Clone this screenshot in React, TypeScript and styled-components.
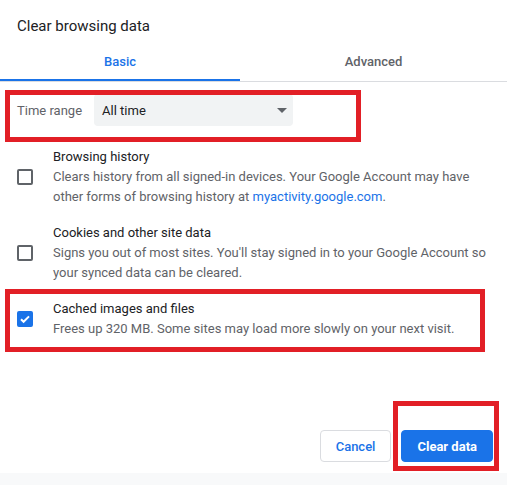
import styled, { createGlobalStyle } from "styled-components";

const GlobalStyle = createGlobalStyle`
  html, body {
    margin: 0;
    padding: 0;
    background: #ffffff;
  }
  body {
    font-family: Roboto, "Liberation Sans", Arial, sans-serif;
    color: #202124;
  }
`;

const App = () => {
  return (
    <>
      <GlobalStyle />
      <Dialog>
        <Title>Clear browsing data</Title>
        <TabBar>
          <Tab $active $width={240}>
            Basic
          </Tab>
          <Tab $width={267}>Advanced</Tab>
        </TabBar>

        <TimeRow>
          <Label>Time range</Label>
          <Select>
            <span>All time</span>
            <Arrow />
          </Select>
          <Annotation $top={-4} $left={5} $width={356} $height={52} />
        </TimeRow>

        <List>
          {items.map((item) => (
            <Item key={item.id}>
              <Checkbox $checked={item.checked}>
                {item.checked && (
                  <svg width="12" height="12" viewBox="0 0 12 12">
                    <path
                      d="M2 6.2l2.6 2.6L10 3.4"
                      fill="none"
                      stroke="#ffffff"
                      strokeWidth="2"
                    />
                  </svg>
                )}
              </Checkbox>
              <ItemText>
                <ItemTitle>{item.title}</ItemTitle>
                <ItemDesc>{item.desc()}</ItemDesc>
              </ItemText>
              {item.checked && (
                <Annotation $top={-2} $left={5} $width={480} $height={63} />
              )}
            </Item>
          ))}
        </List>

        <Footer>
          <Button>Cancel</Button>
          <Button $primary>
            Clear data
            <Annotation $top={-30} $left={-9} $width={106} $height={70} />
          </Button>
        </Footer>
        <BottomStrip />
      </Dialog>
    </>
  );
};

export default App;

const Dialog = styled.div`
  width: 507px;
  height: 485px;
  display: flex;
  flex-direction: column;
  background: #ffffff;
  overflow: hidden;
`;

const Title = styled.div`
  padding: 16px 17px 0;
  height: 24px;
  font-size: 15px;
  line-height: 20px;
  color: #202124;
`;

const TabBar = styled.div`
  display: flex;
  border-bottom: 1px solid #dadce0;
`;

const Tab = styled.div<{ $active?: boolean; $width: number }>`
  width: ${(p) => p.$width}px;
  height: 41px;
  box-sizing: border-box;
  padding-top: 3px;
  display: flex;
  align-items: center;
  justify-content: center;
  font-size: 13px;
  font-weight: 500;
  color: ${(p) => (p.$active ? "#1a73e8" : "#5f6368")};
  border-bottom: 2px solid ${(p) => (p.$active ? "#1a73e8" : "transparent")};
`;

const TimeRow = styled.div`
  position: relative;
  margin-top: 12px;
  padding-left: 17px;
  display: flex;
  align-items: center;
  gap: 12px;
  height: 32px;
`;

const Label = styled.div`
  font-size: 13px;
  color: #5f6368;
`;

const Select = styled.div`
  width: 199px;
  height: 32px;
  box-sizing: border-box;
  padding: 0 6px 0 8px;
  border-radius: 4px;
  background: #f1f3f4;
  display: flex;
  align-items: center;
  justify-content: space-between;
  font-size: 13px;
  color: #202124;
`;

const Arrow = styled.div`
  width: 0;
  height: 0;
  border-left: 5px solid transparent;
  border-right: 5px solid transparent;
  border-top: 5px solid #5f6368;
`;

const List = styled.div`
  margin-top: 13px;
  display: flex;
  flex-direction: column;
`;

const Item = styled.div`
  position: relative;
  display: flex;
  align-items: center;
  gap: 20px;
  padding: 8px 14px 8px 17px;
`;

const Checkbox = styled.div<{ $checked?: boolean }>`
  flex: none;
  width: 16px;
  height: 16px;
  box-sizing: border-box;
  border-radius: 2px;
  border: 2px solid ${(p) => (p.$checked ? "#1a73e8" : "#5f6368")};
  background: ${(p) => (p.$checked ? "#1a73e8" : "transparent")};
  display: flex;
  align-items: center;
  justify-content: center;
`;

const ItemText = styled.div`
  display: flex;
  flex-direction: column;
  font-size: 13px;
  line-height: 20px;
`;

const ItemTitle = styled.div`
  color: #202124;
`;

const ItemDesc = styled.div`
  color: #5f6368;
`;

const Link = styled.a`
  color: #1a73e8;
  text-decoration: none;
`;

const Footer = styled.div`
  margin-top: auto;
  display: flex;
  justify-content: flex-end;
  gap: 10px;
  padding: 0 14px 11px;
`;

const Button = styled.button<{ $primary?: boolean }>`
  position: relative;
  height: 32px;
  padding: 0 15px;
  border-radius: 4px;
  font-family: Roboto, "Liberation Sans", Arial, sans-serif;
  font-size: 13px;
  font-weight: ${(p) => (p.$primary ? 700 : 500)};
  cursor: pointer;
  color: ${(p) => (p.$primary ? "#ffffff" : "#1a73e8")};
  background: ${(p) => (p.$primary ? "#1a73e8" : "#ffffff")};
  border: 1px solid ${(p) => (p.$primary ? "#1a73e8" : "#dadce0")};
`;

const BottomStrip = styled.div`
  height: 12px;
  background: #f8f9fa;
`;

const Annotation = styled.div<{
  $top: number;
  $left: number;
  $width: number;
  $height: number;
}>`
  position: absolute;
  top: ${(p) => p.$top}px;
  left: ${(p) => p.$left}px;
  width: ${(p) => p.$width}px;
  height: ${(p) => p.$height}px;
  box-sizing: border-box;
  border: 5px solid #e21f26;
  pointer-events: none;
`;

const items = [
  {
    id: "history",
    title: "Browsing history",
    checked: false,
    desc: () => (
      <>
        Clears history from all signed-in devices. Your Google Account may have
        other forms of browsing history at{" "}
        <Link href="#">myactivity.google.com</Link>.
      </>
    ),
  },
  {
    id: "cookies",
    title: "Cookies and other site data",
    checked: false,
    desc: () => (
      <>
        Signs you out of most sites. You'll stay signed in to your Google
        Account so your synced data can be cleared.
      </>
    ),
  },
  {
    id: "cache",
    title: "Cached images and files",
    checked: true,
    desc: () => (
      <>Frees up 320 MB. Some sites may load more slowly on your next visit.</>
    ),
  },
];
